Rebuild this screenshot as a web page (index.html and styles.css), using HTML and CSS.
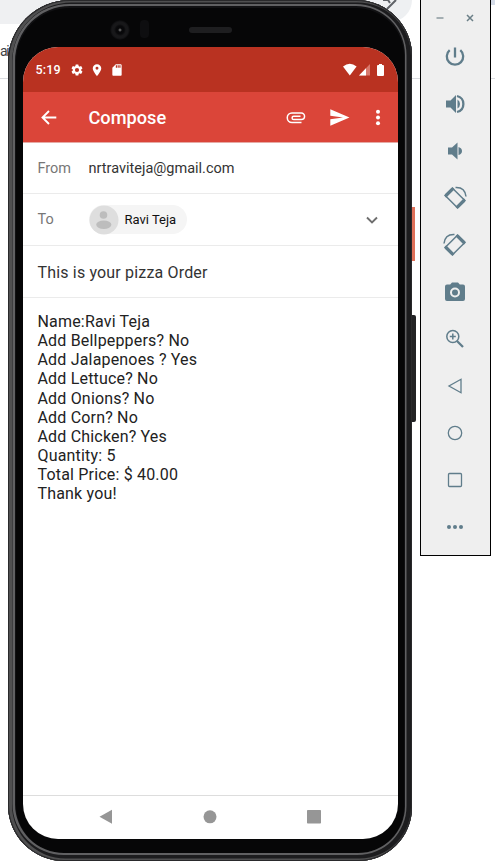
FILE: index.html
```html
<!DOCTYPE html>
<html lang="en">
<head>
<meta charset="utf-8">
<title>Compose</title>
<link rel="stylesheet" href="styles.css">
</head>
<body>
<div class="backdrop">
  <div class="tabstrip"></div>
  <div class="address">ai</div>
  <div class="pill"><svg width="22" height="12" viewBox="0 0 22 12"><path d="M3 0h5l2 3M7 9l9-9" fill="none" stroke="#5f6368" stroke-width="2"/></svg></div>
  <div class="corner"></div>
</div>
<main class="stage">
  <section class="phone">
    <i class="power-key"></i><i class="volume-key"></i>
    <div class="bezel"><span class="camera"></span><span class="sensor"></span><span class="speaker"></span></div>
    <div class="screen">
      <div class="status">
        <span class="time">5:19</span>
        <svg class="gear" width="14" height="14" viewBox="0 0 24 24"><path fill="#fff" d="M19.14 12.94c.04-.3.06-.61.06-.94s-.02-.64-.07-.94l2.03-1.58a.5.5 0 0 0 .12-.61l-1.92-3.32a.5.5 0 0 0-.59-.22l-2.39.96c-.5-.38-1.03-.7-1.62-.94L14.4 2.81A.48.48 0 0 0 13.92 2.400h-3.840a.47.47 0 0 0-.47.41l-.36 2.540c-.59.24-1.130.57-1.620.94l-2.390-.96a.48.48 0 0 0-.59.22L2.740 8.870a.48.48 0 0 0 .12.61l2.030 1.580c-.05.3-.09.63-.09.94s.02.64.07.94l-2.030 1.580a.5.5 0 0 0-.12.61l1.920 3.320c.12.22.37.29.59.22l2.390-.96c.5.38 1.030.7 1.620.94l.36 2.540c.05.24.24.41.48.41h3.840c.24 0 .44-.17.47-.41l.36-2.540c.59-.24 1.130-.56 1.620-.94l2.390.96c.22.08.47 0 .59-.22l1.920-3.320a.48.48 0 0 0-.12-.61zM12 15.600a3.600 3.600 0 1 1 0-7.200 3.600 3.600 0 0 1 0 7.200z"/></svg>
        <svg class="pin" width="14" height="14" viewBox="0 0 24 24"><path fill="#fff" fill-rule="evenodd" d="M12 2C8 2 4.700 5 4.700 9c0 5.300 7.300 13.500 7.300 13.500S19.300 14.300 19.300 9C19.300 5 16 2 12 2zm0 9.500a2.500 2.500 0 1 1 0-5 2.500 2.500 0 0 1 0 5z"/></svg>
        <svg class="card" width="14" height="14" viewBox="0 0 24 24"><path fill="#fff" fill-rule="evenodd" d="M18 2h-8L4 8v12c0 1.100.9 2 2 2h12c1.100 0 2-.9 2-2V4c0-1.100-.9-2-2-2zm-6 6h-2V4h2zm3 0h-2V4h2zm3 0h-2V4h2z"/></svg>
        <svg class="signals" width="44" height="14" viewBox="0 0 44 14"><path fill="#fff" d="M0 3.500Q6.800-1.800 13.600 3.500L6.800 12.500z"/><path fill="#d9786c" d="M16 12.500 27 1v11.500z"/><path fill="#fff" d="m16 12.500 7-7.300v7.300z"/><path fill="#fff" d="M36 1h3v1h1q1 0 1 1v9q0 1-1 1h-5q-1 0-1-1V3q0-1 1-1h1z"/></svg>
      </div>
      <header class="appbar">
        <svg width="16" height="16" viewBox="0 0 16 16"><path d="M15.300 7.500H2M8 1 1.500 7.500 8 14" fill="none" stroke="#fff" stroke-width="1.900"/></svg>
        <h1>Compose</h1>
        <svg class="clip" width="20" height="12" viewBox="0 0 20 12"><path d="M15.500 10.500H6A4.600 4.600 0 0 1 6 1H15.300A3.200 3.200 0 0 1 15.300 7.500H7.700A1.600 1.600 0 0 1 7.700 4.300H14.500" fill="none" stroke="#fff" stroke-width="1.500"/></svg>
        <svg class="send" width="20" height="18" viewBox="0 0 20 18"><path fill="#fff" d="M.3.200 19.500 8.500.3 16.700v-6.400L13 8.500.3 6.700z"/></svg>
        <svg class="more" width="6" height="18" viewBox="0 0 6 18"><g fill="#fff"><circle cx="3" cy="2.800" r="2"/><circle cx="3" cy="8.500" r="2"/><circle cx="3" cy="14.200" r="2"/></g></svg>
      </header>
      <div class="row"><label>From</label><span class="from">nrtraviteja@gmail.com</span></div>
      <div class="row to"><label>To</label>
        <div class="chip"><svg width="30" height="30" viewBox="0 0 30 30"><circle cx="15" cy="15" r="14.500" fill="#dedede"/><circle cx="14.500" cy="10" r="3.800" fill="#bdbdbd"/><ellipse cx="14.800" cy="19.700" rx="7.600" ry="4.200" fill="#bdbdbd"/></svg><span>Ravi Teja</span></div>
        <svg class="chevron" width="12" height="8" viewBox="0 0 12 8"><path d="m1 1.500 5 5 5-5" fill="none" stroke="#6e6e6e" stroke-width="1.900"/></svg>
      </div>
      <div class="row subject">This is your pizza Order</div>
      <div class="message">Name:Ravi Teja<br>Add Bellpeppers? No<br>Add Jalapenoes ? Yes<br>Add Lettuce? No<br>Add Onions? No<br>Add Corn? No<br>Add Chicken? Yes<br>Quantity: 5<br>Total Price: $ 40.00<br>Thank you!</div>
      <nav class="navbar">
        <svg width="16" height="16" viewBox="0 0 16 16"><path fill="#969696" d="M14 .8v14L1.500 7.800z"/></svg>
        <svg width="16" height="16" viewBox="0 0 16 16"><circle cx="8" cy="7.800" r="6.500" fill="#969696"/></svg>
        <svg width="16" height="16" viewBox="0 0 16 16"><rect x="1" y="1" width="14" height="13.500" rx=".8" fill="#969696"/></svg>
      </nav>
    </div>
  </section>
  <aside class="tools">
    <div class="window-buttons"><svg width="8" height="8" viewBox="0 0 8 8"><path d="M.5 4h7" stroke="#8b999e" stroke-width="1.500"/></svg><svg width="8" height="8" viewBox="0 0 8 8"><path d="m1 1 6 6m0-6L1 7" stroke="#6b7f87" stroke-width="1.500"/></svg></div>
    <svg viewBox="0 0 24 24"><path d="M12 2.500v10M6.700 5.200a8.200 8.200 0 1 0 10.600 0" class="line bold"/></svg>
    <svg viewBox="0 0 24 24"><path class="fill" d="M3 8.500h4.500L13 3v18l-5.500-5.500H3zm11.500-1q2.500 1.500 2.500 4.500t-2.500 4.500z"/><path class="line bold" d="M14 4c8.500 2 8.500 14 0 16"/></svg>
    <svg viewBox="0 0 24 24"><path class="fill" d="M5 8.500h4l5.500-5v17l-5.500-5H5zm10.500-.5q3.500 1 3.500 4t-3.500 4z"/></svg>
    <svg viewBox="0 0 24 24"><g transform="rotate(-45 12 12)"><rect x="6.800" y="3" width="10.400" height="18" rx="1" class="line"/><path class="fill" d="M6 2.500h12v3H6zm0 16h12v3H6z"/></g><path d="M12.500 1.500Q22 1 23 10.500" class="line"/></svg>
    <svg viewBox="0 0 24 24"><g transform="rotate(45 12 12)"><rect x="6.800" y="3" width="10.400" height="18" rx="1" class="line"/><path class="fill" d="M6 2.500h12v3H6zm0 16h12v3H6z"/></g><path d="M11.500 1.500Q2 1 1 10.500" class="line"/></svg>
    <svg viewBox="0 0 24 24"><path fill-rule="evenodd" class="fill" d="m9 2.500-1.800 2H4q-2 0-2 2v12.500q0 2 2 2h16q2 0 2-2V6.500q0-2-2-2h-3.200L15 2.500zm3 5a5 5 0 1 1 0 10 5 5 0 0 1 0-10z"/><circle class="fill" cx="12" cy="12.500" r="3"/></svg>
    <svg viewBox="0 0 24 24"><circle cx="9.800" cy="9.500" r="6" class="line"/><path class="line" d="M9.800 6.500v6M6.800 9.500h6"/><path class="line bold" d="m14 14 6 6"/></svg>
    <svg viewBox="0 0 24 24"><path class="line thin" d="M18 5.300v13.400L6 12z"/></svg>
    <svg viewBox="0 0 24 24"><circle cx="12" cy="12" r="6.700" class="line thin"/></svg>
    <svg viewBox="0 0 24 24"><rect x="5.500" y="5.500" width="13" height="13" rx="1" class="line thin"/></svg>
    <svg viewBox="0 0 24 24"><g class="fill"><circle cx="6" cy="12" r="2"/><circle cx="12" cy="12" r="2"/><circle cx="18" cy="12" r="2"/></g></svg>
  </aside>
</main>
</body>
</html>
```
FILE: styles.css
```css
* { box-sizing: border-box; }
body { margin: 0; width: 495px; height: 864px; overflow: hidden; background: #fff; font-family: Roboto, sans-serif; }
svg { display: block; flex: none; }
.backdrop { position: absolute; inset: 0; overflow: hidden; }
.tabstrip { width: 60px; height: 24px; background: #eff0f2; }
.address { height: 55px; border-bottom: 1px solid #dadce0; font-size: 14px; line-height: 55px; color: #3c4043; letter-spacing: -1.300px; }
.pill { position: absolute; left: 340px; top: -22px; width: 72px; height: 44px; border-radius: 22px; background: #eef0f2; padding: 22px 0 0 40px; }
.corner { position: absolute; right: 0; top: 0; width: 4px; height: 5px; background: #d5dce8; }
.stage { position: relative; display: flex; align-items: flex-start; }
.phone {
  position: relative; width: 404px; height: 861px; margin: 0 8px 0 8px; padding: 0 14px 22px 15px;
  border-radius: 62px 56px 54px 56px; background: #060607;
  box-shadow: inset 0 0 0 1px #29292b, inset 1.500px 0 0 2.500px #4f4f50, inset -.5px -1px 0 5px #1c1c1e, inset 0 -1px 0 7px #606062, inset 0 0 0 8px #111113;
}
.power-key, .volume-key { position: absolute; left: 404px; width: 3px; }
.power-key { top: 207px; height: 54px; background: #df7059; }
.volume-key { top: 315px; height: 107px; width: 4px; background: #222224; border-radius: 0 2px 2px 0; }
.bezel { position: relative; height: 47px; }
.camera { position: absolute; left: 87px; top: 20px; width: 20px; height: 20px; border-radius: 50%; background: radial-gradient(circle, #666 0 .5px, #08080a 2px 4px, #18181a 6px 8px, #08080a 10px); }
.sensor { position: absolute; left: 117px; top: 20px; width: 9px; height: 18px; border-radius: 4px; background: #0e0e10; }
.speaker { position: absolute; left: 166px; top: 27px; width: 43px; height: 6px; border-radius: 3px; background: #1e1e20; }
.screen { width: 375px; height: 792px; overflow: hidden; border-radius: 35px; background: #fff; display: flex; flex-direction: column; }
.status { height: 45px; background: #b93221; display: flex; align-items: center; padding: 0 12px 0 12.500px; color: #fff; }
.time { width: 34.500px; font-size: 12.500px; font-weight: 500; letter-spacing: .2px; }
.pin { margin-left: 6px; }
.card { margin-left: 6px; }
.signals { margin-left: auto; margin-right: -1px; }
.appbar { height: 50px; background: #db4539; display: flex; align-items: center; padding: 1px 17.500px 0 17.500px; box-shadow: 0 1px 0 #e6aaa5; z-index: 1; flex: none; }
.appbar h1 { margin: 0 auto 0 32px; font-size: 18.200px; font-weight: 500; line-height: 24px; color: #fff; }
.send { margin-left: 24px; }
.more { margin-left: 25px; }
.row { height: 52px; flex: none; display: flex; align-items: center; border-bottom: 1px solid #ebebeb; padding: 2px 20px 0 14.500px; font-size: 14.500px; color: #333; }
.row label { width: 51px; color: #777; }
.to { padding-top: 0; }
.chip { display: flex; align-items: center; gap: 6px; width: 98px; height: 29px; border-radius: 15px; background: #f5f5f5; font-size: 13px; color: #111; }
.chevron { margin-left: auto; }
.subject { font-size: 16px; letter-spacing: .17px; }
.message { flex: 1; padding: 14px 14.500px; font-size: 16px; letter-spacing: .18px; line-height: 19.150px; color: #222; }
.navbar { height: 44px; border-top: 1px solid #ddd; display: flex; justify-content: center; gap: 88px; padding: 13px 2px 0 0; }
.tools { width: 71px; height: 556px; border: 1px solid #000; border-top: 0; background: #efefef; display: flex; flex-direction: column; align-items: center; }
.tools > svg { width: 24px; height: 24px; margin: 0 2px 23px 0; }
.window-buttons { width: 100%; height: 45px; flex: none; padding: 14px 16px 0 15px; display: flex; justify-content: space-between; }
.tools > svg:last-child { margin-bottom: 0; }
.fill { fill: #607d8b; }
.line { fill: none; stroke: #607d8b; stroke-width: 1.500; }
.bold { stroke-width: 2.300; }
.thin { stroke-width: 1.300; }
```
